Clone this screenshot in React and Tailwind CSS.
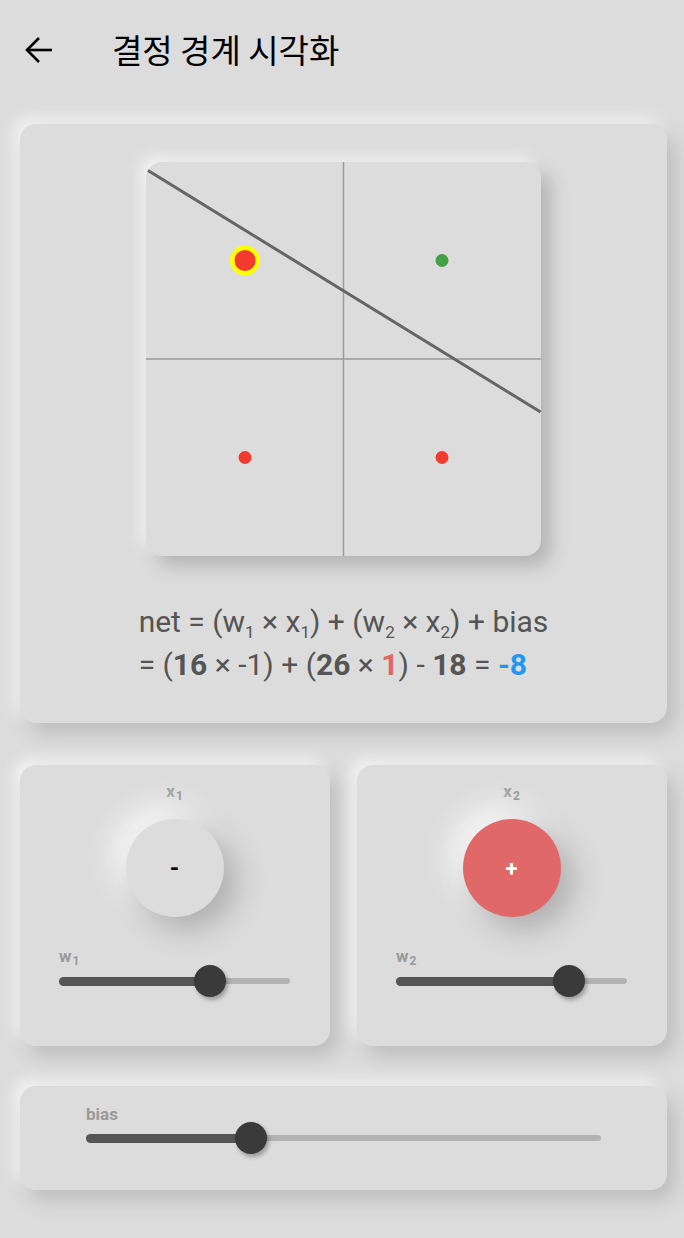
import { useState } from 'react';

// neumorphic decision-boundary page
const W1 = 16;
const W2 = 26;
const BIAS = -18;

const points = [
  { x: -1, y: 1, selected: true },
  { x: 1, y: 1 },
  { x: -1, y: -1 },
  { x: 1, y: -1 },
];

const Sub = ({ children }) => (
  <sub className="text-[17px] align-baseline relative top-[6px]">{children}</sub>
);

const Chart = () => {
  const size = 395;
  const cx = 197.5;
  const cy = 197;
  const unit = 98.5;
  const toPx = (x, y) => [cx + x * unit, cy - y * unit];
  // boundary: w1*x + w2*y + bias = 0
  const yAt = (x) => -(W1 * x + BIAS) / W2;
  const [lx1, ly1] = toPx(-2, yAt(-2));
  const [lx2, ly2] = toPx(2, yAt(2));

  return (
    <div className="w-[395px] h-[394px] rounded-[16px] bg-[#dcdcdc] overflow-hidden shadow-[10px_10px_18px_#b4b4b4,-6px_-6px_14px_#f4f4f4]">
      <svg width={size} height="394" viewBox="0 0 395 394">
        <line x1={cx} y1="0" x2={cx} y2="394" stroke="#9a9a9a" strokeWidth="1.5" />
        <line x1="0" y1={cy} x2={size} y2={cy} stroke="#9a9a9a" strokeWidth="1.5" />
        <line x1={lx1} y1={ly1} x2={lx2} y2={ly2} stroke="#666" strokeWidth="3" />
        {points.map((p, i) => {
          const [px, py] = toPx(p.x, p.y);
          const net = W1 * p.x + W2 * p.y + BIAS;
          const color = net > 0 ? '#43a047' : '#f23a2e';
          if (p.selected) {
            return (
              <g key={i}>
                <circle cx={px} cy={py} r="15" fill="#ffff00" />
                <circle cx={px} cy={py} r="10.5" fill={color} />
              </g>
            );
          }
          return <circle key={i} cx={px} cy={py} r="6.5" fill={color} />;
        })}
      </svg>
    </div>
  );
};

const Slider = ({ value }) => (
  <div className="relative h-8 flex items-center">
    <div className="absolute left-0 right-0 h-[6px] rounded-full bg-[#b3b3b3]" />
    <div
      className="absolute left-0 h-[9px] rounded-full bg-[#555555]"
      style={{ width: `${value * 100}%` }}
    />
    <div
      className="absolute w-8 h-8 rounded-full bg-[#3a3a3a] -translate-x-1/2 shadow-[2px_3px_4px_rgba(0,0,0,0.3)]"
      style={{ left: `${value * 100}%` }}
    />
  </div>
);

const Label = ({ name, sub, className }) => (
  <div className={'text-[17px] leading-[20px] font-bold text-[#9a9a9a] ' + className}>
    {name}
    <span className="text-[12px] relative top-[3px] ml-[1px]">{sub}</span>
  </div>
);

const InputCard = ({ sub, on, value }) => (
  <div className="rounded-[16px] bg-[#dcdcdc] h-[281px] pt-[16px] pl-[39px] pr-[40px] shadow-[8px_10px_20px_#bcbcbc,-6px_-6px_14px_#f6f6f6] flex flex-col">
    <Label name="x" sub={sub} className="text-center" />
    <div className="flex justify-center mt-[16px]">
      <button
        className={
          on
            ? 'w-[98px] h-[98px] rounded-full bg-[#e06868] text-white text-[22px] font-bold shadow-[12px_12px_30px_#adadad,-12px_-12px_30px_#fafafa]'
            : 'w-[98px] h-[98px] rounded-full bg-[#dcdcdc] text-black text-[24px] font-bold shadow-[12px_12px_30px_#adadad,-12px_-12px_30px_#fafafa]'
        }
      >
        {on ? '+' : '-'}
      </button>
    </div>
    <Label name="w" sub={sub} className="mt-[29px]" />
    <div className="-mt-[3px]">
      <Slider value={value} />
    </div>
  </div>
);

export default function App() {
  const [x1] = useState(-1);
  const [x2] = useState(1);
  const net = W1 * x1 + W2 * x2 + BIAS;

  return (
    <div
      className="min-h-[1238px] bg-[#dcdcdc] pl-5 pr-[17px] pb-10"
      style={{ fontFamily: 'Roboto, "Noto Sans", "Noto Sans CJK KR", sans-serif' }}
    >
      <header className="h-[100px] flex items-center -mx-5">
        <button className="ml-[24px] w-[30px] h-[30px] flex items-center justify-center">
          <svg width="30" height="30" viewBox="0 0 30 30" fill="none" stroke="#000" strokeWidth="2.6">
            <path d="M28 15H3.5" />
            <path d="M15 3 3 15l12 12" />
          </svg>
        </button>
        <h1
          className="ml-[58px] text-[33px] font-normal text-black"
          style={{ fontFamily: '"Noto Sans CJK KR", "Noto Sans", sans-serif' }}
        >
          결정 경계 시각화
        </h1>
      </header>

      <section className="mt-6 rounded-[16px] bg-[#dcdcdc] h-[599px] pt-[38px] flex flex-col items-center shadow-[8px_10px_20px_#bcbcbc,-6px_-6px_16px_#f6f6f6]">
        <Chart />
        <div className="mt-[44px] text-[30px] leading-[43px] text-[#555555] text-left">
          <p>
            net = (w<Sub>1</Sub> × x<Sub>1</Sub>) + (w<Sub>2</Sub> × x<Sub>2</Sub>) + bias
          </p>
          <p>
            = (<b>{W1}</b> × {x1}) + (<b>{W2}</b> × <b className="text-[#e06666]">{x2}</b>) - <b>{-BIAS}</b> ={' '}
            <b className="text-[#2196f3]">{net}</b>
          </p>
        </div>
      </section>

      <div className="mt-[42px] grid grid-cols-2 gap-[27px]">
        <InputCard sub="1" on={x1 > 0} value={0.654} />
        <InputCard sub="2" on={x2 > 0} value={0.75} />
      </div>

      <section className="mt-[40px] rounded-[16px] bg-[#dcdcdc] h-[104px] pt-[18px] px-[66px] shadow-[8px_10px_20px_#bcbcbc,-6px_-6px_14px_#f6f6f6]">
        <div className="text-[17px] leading-[20px] font-bold text-[#9a9a9a]">bias</div>
        <div className="-mt-[2px]">
          <Slider value={0.32} />
        </div>
      </section>
    </div>
  );
}
